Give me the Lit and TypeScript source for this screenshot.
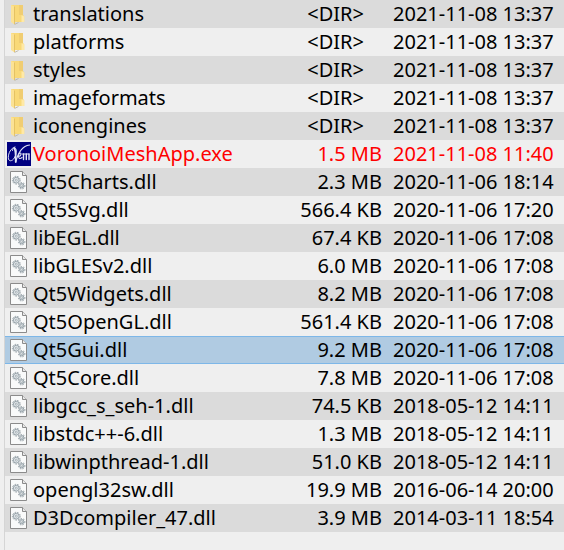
import { LitElement, html, css, svg } from "lit";
import { customElement, property } from "lit/decorators.js";
import { classMap } from "lit/directives/class-map.js";

type Kind = "folder" | "app" | "library";

interface Entry {
  name: string;
  size: string;
  date: string;
  kind: Kind;
  selected?: boolean;
}

const folder = (name: string): Entry => ({ name, size: "<DIR>", date: "2021-11-08 13:37", kind: "folder" });
const dll = (name: string, size: string, date: string, selected = false): Entry => ({
  name,
  size,
  date,
  kind: "library",
  selected,
});

const ENTRIES: Entry[] = [
  folder("translations"),
  folder("platforms"),
  folder("styles"),
  folder("imageformats"),
  folder("iconengines"),
  { name: "VoronoiMeshApp.exe", size: "1.5 MB", date: "2021-11-08 11:40", kind: "app" },
  dll("Qt5Charts.dll", "2.3 MB", "2020-11-06 18:14"),
  dll("Qt5Svg.dll", "566.4 KB", "2020-11-06 17:20"),
  dll("libEGL.dll", "67.4 KB", "2020-11-06 17:08"),
  dll("libGLESv2.dll", "6.0 MB", "2020-11-06 17:08"),
  dll("Qt5Widgets.dll", "8.2 MB", "2020-11-06 17:08"),
  dll("Qt5OpenGL.dll", "561.4 KB", "2020-11-06 17:08"),
  dll("Qt5Gui.dll", "9.2 MB", "2020-11-06 17:08", true),
  dll("Qt5Core.dll", "7.8 MB", "2020-11-06 17:08"),
  dll("libgcc_s_seh-1.dll", "74.5 KB", "2018-05-12 14:11"),
  dll("libstdc++-6.dll", "1.3 MB", "2018-05-12 14:11"),
  dll("libwinpthread-1.dll", "51.0 KB", "2018-05-12 14:11"),
  dll("opengl32sw.dll", "19.9 MB", "2016-06-14 20:00"),
  dll("D3Dcompiler_47.dll", "3.9 MB", "2014-03-11 18:54"),
];

const folderArt = svg`
  <path d="M4 3h12v10l1.200 1.200V20H4z" fill="#f9d978"/>
  <path d="M12 3h4v10h-4z" fill="#f0cd72"/>
  <path d="M14.500 13.200l2.700 1V20h-2.700z" fill="#ffe9a6"/>
  <path d="M4 3l3.500 1.500V22.500L4 20z" fill="#fbe295"/>
  <path d="M7.500 4.500V22" stroke="#e0bb5c" stroke-width=".8"/>
  <path d="M7.500 22.500l4-2" stroke="#b9b4a8" stroke-width=".9"/>`;

const appArt = svg`
  <rect width="24" height="24" fill="#000080"/>
  <g fill="none" stroke="#dfe3f5" stroke-linecap="round">
    <path d="M8 5C4 6 1.300 11 1.300 15.500c0 4.500 4 4 6 .500C9.500 12.500 10 8 8.500 6.300 7 5 5.500 6.500 5.500 8.500" stroke-width="1"/>
    <path d="M7.500 6.500c1.500 3 1.200 8 1.200 13.500" stroke-width="1.700"/>
    <path d="M8.700 20C10.500 13 14.500 4 22.500 3" stroke-width="1.200"/>
    <path d="M11.800 14.500c2 0 3-3.500 1.500-3.500-2 0-2.500 5.500-.3 5.500 1 0 1.500-.5 2-1" stroke-width="1.100"/>
    <path d="M16.500 17.500V12M19.300 17.500V12M22 17.500V12" stroke-width="1.400"/>
    <path d="M15.500 12H22" stroke-width="1.200"/>
  </g>`;

const gear = (cx: number, cy: number, r: number) => svg`
  <circle cx=${cx} cy=${cy} r=${r} fill="none" stroke="#8f9aa1" stroke-width="1" stroke-dasharray="1.500 1.200"/>
  <circle cx=${cx} cy=${cy} r=${r - 1} fill="#e3e8eb" stroke="#95a1a8" stroke-width="1"/>
  <circle cx=${cx} cy=${cy} r="1" fill="#fafbfc" stroke="#8d999f" stroke-width=".7"/>`;

const libraryArt = svg`
  <path d="M3.500 1.500h12l4 4v17h-16z" fill="#f9fafa" stroke="#8b8b8b"/>
  <path d="M15.500 1.500v4h4" fill="#e9e9e9" stroke="#8b8b8b"/>
  ${gear(9.3, 10.2, 3.9)}
  ${gear(14.7, 15.7, 3.2)}`;

const ART = { folder: folderArt, app: appArt, library: libraryArt };

@customElement("file-icon")
class FileIcon extends LitElement {
  @property() kind: Kind = "library";

  static styles = css`
    :host {
      display: block;
      width: 24px;
      height: 24px;
    }
    .art {
      display: block;
      width: 100%;
      height: 100%;
    }
  `;

  render() {
    return html`<svg class="art" viewBox="0 0 24 24" aria-hidden="true">${ART[this.kind]}</svg>`;
  }
}

@customElement("app-root")
class AppRoot extends LitElement {
  static styles = css`
    :host {
      display: block;
      min-height: 100vh;
      box-sizing: border-box;
      padding-left: 4px;
      background: #efefef;
      color: #000;
      font: 20px/28px "Noto Sans", "Open Sans", sans-serif;
    }
    .panel {
      min-height: 100vh;
      border-left: 1px solid #d5d5d5;
    }
    .files {
      width: 100%;
      border-collapse: collapse;
      table-layout: fixed;
    }
    .row {
      height: 28px;
    }
    .row:nth-child(odd) {
      background: #dbdbdb;
    }
    .row.selected {
      background: #b0cbe2;
      box-shadow: inset 0 1px #7db7e8, inset 0 -1px #7db7e8;
    }
    .row.app {
      color: #f00;
    }
    .cell {
      padding: 0;
      font-weight: 400;
      text-align: left;
      white-space: nowrap;
    }
    .icon {
      width: 28px;
    }
    .icon file-icon {
      margin-left: 2px;
    }
    .size {
      padding-right: 11px;
      text-align: right;
    }
    .folder .size {
      padding-right: 29px;
    }
    .size-col {
      width: 106px;
    }
    .date {
      width: 171px;
    }
  `;

  render() {
    return html`
      <main class="panel">
        <table class="files" aria-label="Files">
          <colgroup>
            <col class="icon" />
            <col />
            <col class="size-col" />
            <col class="date" />
          </colgroup>
          <tbody>
            ${ENTRIES.map(
              (e) => html`
                <tr class=${classMap({ row: true, [e.kind]: true, selected: !!e.selected })}>
                  <td class="cell icon"><file-icon .kind=${e.kind}></file-icon></td>
                  <th class="cell" scope="row">${e.name}</th>
                  <td class="cell size">${e.size}</td>
                  <td class="cell date">${e.date}</td>
                </tr>
              `,
            )}
          </tbody>
        </table>
      </main>
    `;
  }
}
